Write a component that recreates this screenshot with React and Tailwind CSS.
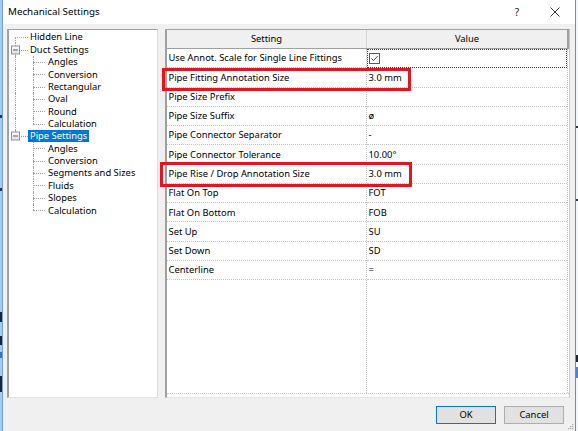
import React from "react";

const DOT = "border-dotted border-[#a0a0a0]";

const treeRows = [
  { label: "Hidden Line", level: 0, l0: "bottom" },
  { label: "Duct Settings", level: 0, l0: "full", box: true },
  { label: "Angles", level: 1, l0: "full", l1: "full" },
  { label: "Conversion", level: 1, l0: "full", l1: "full" },
  { label: "Rectangular", level: 1, l0: "full", l1: "full" },
  { label: "Oval", level: 1, l0: "full", l1: "full" },
  { label: "Round", level: 1, l0: "full", l1: "full" },
  { label: "Calculation", level: 1, l0: "full", l1: "top" },
  { label: "Pipe Settings", level: 0, l0: "top", box: true, selected: true },
  { label: "Angles", level: 1, l1: "full" },
  { label: "Conversion", level: 1, l1: "full" },
  { label: "Segments and Sizes", level: 1, l1: "full" },
  { label: "Fluids", level: 1, l1: "full" },
  { label: "Slopes", level: 1, l1: "full" },
  { label: "Calculation", level: 1, l1: "top" },
];

const settings = [
  ["Use Annot. Scale for Single Line Fittings", "check"],
  ["Pipe Fitting Annotation Size", "3.0 mm"],
  ["Pipe Size Prefix", ""],
  ["Pipe Size Suffix", "ø"],
  ["Pipe Connector Separator", "-"],
  ["Pipe Connector Tolerance", "10.00°"],
  ["Pipe Rise / Drop Annotation Size", "3.0 mm"],
  ["Flat On Top", "FOT"],
  ["Flat On Bottom", "FOB"],
  ["Set Up", "SU"],
  ["Set Down", "SD"],
  ["Centerline", "="],
];

// desktop showing through at the window edges: [height, colour]
const leftEdge = [
  [115, "#a9c9ee"], [3, "#2d3440"], [70, "#a9c9ee"], [3, "#2d3440"], [121, "#a9c9ee"],
  [10, "#1c2633"], [14, "#a9c9ee"], [9, "#1c2633"], [7, "#a9c9ee"], [6, "#3d6fc2"],
  [18, "#a9c9ee"], [16, "#1c2633"], [39, "#a9c9ee"],
];
const rightEdge = [
  [126, "#f3f6fa"], [2, "#2d3440"], [71, "#f3f6fa"], [2, "#2d3440"], [154, "#f3f6fa"],
  [7, "#1c2633"], [5, "#f3f6fa"], [11, "#4f80d4"], [53, "#f3f6fa"],
];

function Edge({ parts, width }) {
  return (
    <div className={`flex flex-col ${width}`}>
      {parts.map(([h, c], i) => (
        <div key={i} style={{ height: h, background: c }} />
      ))}
    </div>
  );
}

function ExpandBox() {
  return (
    <span className="absolute left-[2px] top-1/2 -translate-y-1/2 w-[9px] h-[9px] border border-[#919191] bg-gradient-to-b from-white to-[#e4e4e4] flex items-center justify-center">
      <span className="w-[5px] h-px bg-[#43598a]" />
    </span>
  );
}

function TreeRow({ row }) {
  return (
    <div className={`relative h-[12.36px] flex items-center ${row.level ? "pl-[37px]" : "pl-[19px]"}`}>
      {row.l0 === "full" && <span className={`absolute left-[6px] top-0 bottom-0 border-l ${DOT}`} />}
      {row.l0 === "bottom" && <span className={`absolute left-[6px] top-1/2 bottom-0 border-l ${DOT}`} />}
      {row.l0 === "top" && <span className={`absolute left-[6px] top-0 h-1/2 border-l ${DOT}`} />}
      {row.level === 0 && <span className={`absolute left-[6px] w-[13px] top-1/2 border-t ${DOT}`} />}
      {row.l1 === "full" && <span className={`absolute left-[24px] top-0 bottom-0 border-l ${DOT}`} />}
      {row.l1 === "top" && <span className={`absolute left-[24px] top-0 h-1/2 border-l ${DOT}`} />}
      {row.level === 1 && <span className={`absolute left-[24px] w-[12px] top-1/2 border-t ${DOT}`} />}
      {row.box && <ExpandBox />}
      <span
        className={`h-[11.5px] flex items-center px-[2px] whitespace-nowrap ${
          row.selected ? "bg-[#0078d7] text-white" : "text-black"
        }`}
      >
        {row.label}
      </span>
    </div>
  );
}

function Tree() {
  return (
    <div className="w-[151px] h-[369px] bg-white border-t border-l-2 border-r border-b border-t-[#a0a0a0] border-l-[#a0a0a0] border-r-[#dcdcdc] border-b-[#e3e3e3] pt-[1px]">
      {treeRows.map((r, i) => (
        <TreeRow key={i} row={r} />
      ))}
    </div>
  );
}

function CheckBox() {
  return (
    <svg width="11" height="11" viewBox="0 0 11 11" className="block">
      <rect x="0.5" y="0.5" width="10" height="10" fill="#fff" stroke="#5a5a5a" />
      <path d="M2.5 5.5 L4.5 7.6 L8.6 3.2" fill="none" stroke="#4a4a4a" strokeWidth="1" />
    </svg>
  );
}

function Grid() {
  return (
    <div className="w-[405px] h-[369px] bg-white border-t border-l-2 border-r border-b border-t-[#a0a0a0] border-l-[#a0a0a0] border-r-[#c8c8c8] border-b-[#e3e3e3] flex flex-col">
      {/* column headers */}
      <div className="h-[19px] flex bg-[#f0f0f0] border-b border-[#a0a0a0]">
        <div className="w-[200px] flex items-center justify-center border-r border-[#d4d4d4]">Setting</div>
        <div className="flex-1 flex items-center justify-center border-r-2 border-[#a0a0a0]">Value</div>
      </div>
      {/* rows */}
      <div className="h-[345px] flex border-b border-dotted border-[#c4c4c4]">
        <div className="w-[200px] flex flex-col border-r border-dotted border-[#c4c4c4]">
          {settings.map(([name], i) => (
            <div key={i} className="h-[19.27px] flex items-center pl-[1.5px] border-b border-dotted border-[#c4c4c4] whitespace-nowrap">
              {name}
            </div>
          ))}
        </div>
        <div className="w-[201px] flex flex-col border-r border-dotted border-[#c4c4c4]">
          {settings.map(([, value], i) => (
            <div
              key={i}
              className={`h-[19.27px] flex items-center pl-[1.5px] border-b border-dotted border-[#c4c4c4] whitespace-nowrap ${
                i === 0 ? "outline outline-1 outline-dotted outline-[#3a3a3a] -outline-offset-1" : ""
              }`}
            >
              {value === "check" ? <CheckBox /> : value}
            </div>
          ))}
        </div>
      </div>
    </div>
  );
}

function Grip() {
  const dots = [
    [4, 0], [2, 2], [4, 2], [0, 4], [2, 4], [4, 4],
  ];
  return (
    <svg width="6" height="6" viewBox="0 0 6 6" className="absolute right-[1px] bottom-[1px]">
      {dots.map(([x, y], i) => (
        <rect key={i} x={x} y={y} width="1.2" height="1.2" fill="#a8a8a8" />
      ))}
    </svg>
  );
}

export default function App() {
  return (
    <div className="w-[578px] h-[431px] flex overflow-hidden bg-white font-['Noto_Sans',sans-serif] text-[9.4px] text-black leading-none">
      <Edge parts={leftEdge} width="w-[2px]" />
      <div className="w-px bg-[#6f9fdc]" />
      <div className="w-[572px] h-full flex flex-col bg-[#f0f0f0] relative">
        {/* caption */}
        <div className="h-[24px] bg-white flex items-center">
          <span className="pl-[5px] text-[9.8px]">Mechanical Settings</span>
          <div className="ml-auto flex h-full pr-[1px]">
            <div className="w-[38px] flex items-center justify-center text-[10px] text-[#222]">?</div>
            <div className="w-[38px] flex items-center justify-center">
              <svg width="10" height="10" viewBox="0 0 10 10">
                <path d="M0.5 0.5 L9.5 9.5 M9.5 0.5 L0.5 9.5" stroke="#333" strokeWidth="1" />
              </svg>
            </div>
          </div>
        </div>
        {/* panels */}
        <div className="flex gap-[7px] pl-[4px] pt-[5px]">
          <Tree />
          <Grid />
        </div>
        {/* buttons */}
        <div className="flex justify-end gap-[8px] pr-[11px] pt-[8px]">
          <button className="w-[60px] h-[18px] bg-[#e1e1e1] border border-[#0078d7] flex items-center justify-center">OK</button>
          <button className="w-[60px] h-[18px] bg-[#e1e1e1] border border-[#adadad] flex items-center justify-center">Cancel</button>
        </div>
        <Grip />
        {/* annotation callouts */}
        <div className="absolute left-[159px] top-[68px] w-[249px] h-[23px] border-[3px] border-[#e5141e]" />
        <div className="absolute left-[157px] top-[162px] w-[252px] h-[25px] border-[3px] border-[#e5141e]" />
      </div>
      <div className="w-px bg-[#5b8fd8]" />
      <Edge parts={rightEdge} width="w-[2px]" />
    </div>
  );
}
